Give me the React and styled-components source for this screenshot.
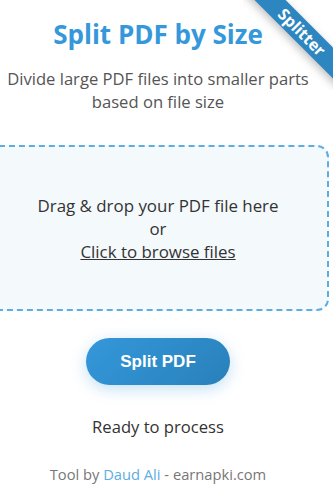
import React from 'react';
import styled, { createGlobalStyle } from 'styled-components';

const GlobalStyle = createGlobalStyle`
  html, body {
    margin: 0;
    padding: 0;
    background: #fff;
    overflow: hidden;
  }
  body {
    font-family: "Open Sans", "Noto Sans", sans-serif;
    color: #333;
  }
`;

export default function App() {
  return (
    <>
      <GlobalStyle />
      <Page>
        <Ribbon>
          <span>Splitter</span>
        </Ribbon>
        <Card>
          <Title>Split PDF by Size</Title>
          <Subtitle>
            Divide large PDF files into smaller parts based on file size
          </Subtitle>
          <DropZone>
            <p>Drag &amp; drop your PDF file here</p>
            <p>or</p>
            <Browse>Click to browse files</Browse>
          </DropZone>
          <SplitButton>Split PDF</SplitButton>
          <Status>Ready to process</Status>
          <Footer>
            Tool by <a href="#">Daud Ali</a> - earnapki.com
          </Footer>
        </Card>
      </Page>
    </>
  );
}

const Page = styled.div`
  position: relative;
  width: 333px;
  height: 491px;
  overflow: hidden;
`;

const Card = styled.div`
  display: flex;
  flex-direction: column;
  align-items: center;
  width: 342px;
  margin-left: -13px;
  padding-top: 15px;
`;

const Title = styled.h1`
  margin: 0;
  font-size: 26px;
  font-weight: 700;
  line-height: 38px;
  color: #3498db;
`;

const Subtitle = styled.p`
  margin: 14px 0 0;
  width: 320px;
  font-size: 16.6px;
  line-height: 23px;
  text-align: center;
  color: #555;
`;

const DropZone = styled.div`
  box-sizing: border-box;
  display: flex;
  flex-direction: column;
  align-items: center;
  justify-content: center;
  width: 100%;
  height: 166px;
  margin-top: 32px;
  border: 2px dashed #5dade2;
  border-radius: 12px;
  background: #f4f9fc;
  font-size: 16.9px;
  line-height: 23px;
  color: #333;

  p {
    margin: 0;
  }
`;

const Browse = styled.p`
  text-decoration: underline;
  cursor: pointer;
`;

const SplitButton = styled.button`
  margin-top: 27px;
  width: 144px;
  height: 47px;
  border: none;
  border-radius: 24px;
  background: linear-gradient(135deg, #3498db, #2980b9);
  box-shadow: 0 4px 15px rgba(52, 152, 219, 0.3);
  color: #fff;
  font-family: "Liberation Sans", Arial, sans-serif;
  font-size: 17px;
  font-weight: 700;
  cursor: pointer;
`;

const Status = styled.div`
  margin-top: 30px;
  font-size: 16.6px;
  line-height: 23px;
  color: #333;
`;

const Footer = styled.div`
  margin-top: 26px;
  font-size: 14.7px;
  line-height: 20px;
  color: #777;

  a {
    color: #5dade2;
    text-decoration: none;
  }
`;

const Ribbon = styled.div`
  position: absolute;
  top: 0;
  right: 0;
  width: 90px;
  height: 90px;
  overflow: hidden;
  z-index: 2;

  span {
    position: absolute;
    top: 21px;
    left: -11px;
    width: 140px;
    height: 22px;
    transform: rotate(45deg);
    background: #2e86c1;
    box-shadow: 0 3px 8px rgba(0, 0, 0, 0.25);
    color: #fff;
    font-family: "Open Sans", "Noto Sans", sans-serif;
    font-size: 16px;
    font-weight: 700;
    line-height: 22px;
    text-align: center;
  }
`;
